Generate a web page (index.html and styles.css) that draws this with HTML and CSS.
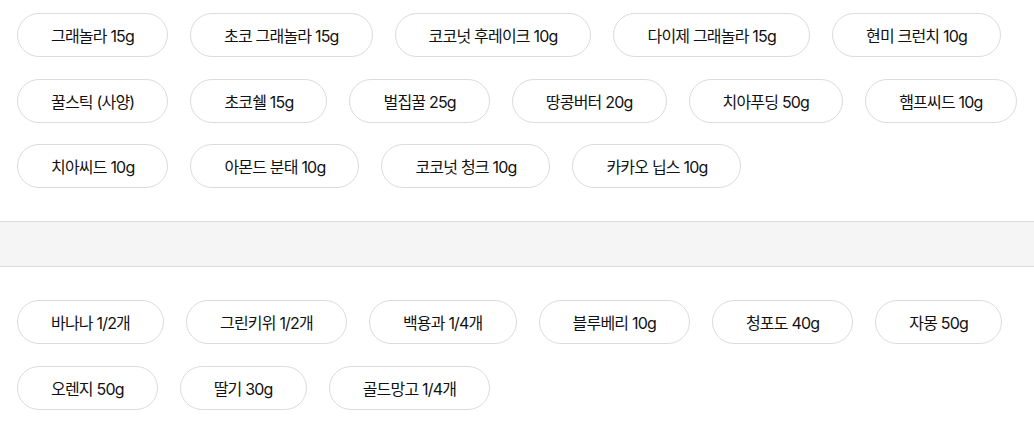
FILE: index.html
```html
<!DOCTYPE html>
<html lang="ko">
<head>
<meta charset="utf-8">
<link rel="stylesheet" href="styles.css">
</head>
<body>
<section class="group group-top">
  <ul class="chips">
    <li class="chip">그래놀라 15g</li>
    <li class="chip">초코 그래놀라 15g</li>
    <li class="chip">코코넛 후레이크 10g</li>
    <li class="chip">다이제 그래놀라 15g</li>
    <li class="chip">현미 크런치 10g</li>
    <li class="chip">꿀스틱 (사양)</li>
    <li class="chip">초코쉘 15g</li>
    <li class="chip">벌집꿀 25g</li>
    <li class="chip">땅콩버터 20g</li>
    <li class="chip">치아푸딩 50g</li>
    <li class="chip">햄프씨드 10g</li>
    <li class="chip">치아씨드 10g</li>
    <li class="chip">아몬드 분태 10g</li>
    <li class="chip">코코넛 청크 10g</li>
    <li class="chip">카카오 닙스 10g</li>
  </ul>
</section>
<div class="divider"></div>
<section class="group group-bottom">
  <ul class="chips">
    <li class="chip">바나나 1/2개</li>
    <li class="chip">그린키위 1/2개</li>
    <li class="chip">백용과 1/4개</li>
    <li class="chip">블루베리 10g</li>
    <li class="chip">청포도 40g</li>
    <li class="chip">자몽 50g</li>
    <li class="chip">오렌지 50g</li>
    <li class="chip">딸기 30g</li>
    <li class="chip">골드망고 1/4개</li>
  </ul>
</section>
</body>
</html>
```

FILE: styles.css
```css
html, body {
  margin: 0;
  padding: 0;
  background: #fff;
}
body {
  font-family: "Inter", "Noto Sans CJK KR", sans-serif;
  color: #111;
  width: 1034px;
}
.group {
  padding: 0 17px;
}
.group-top {
  padding-top: 13px;
  padding-bottom: 33px;
}
.group-bottom {
  padding-top: 33px;
  padding-bottom: 12px;
}
.chips {
  list-style: none;
  margin: 0;
  padding: 0;
  display: flex;
  flex-wrap: wrap;
  gap: 21.5px 22px;
}
.chip {
  box-sizing: border-box;
  height: 44px;
  display: inline-flex;
  align-items: center;
  justify-content: center;
  padding: 0 33px;
  border: 1px solid #dcdcdc;
  border-radius: 22px;
  font-size: 16px;
  letter-spacing: -0.8px;
  white-space: nowrap;
  background: #fff;
}
.divider {
  height: 44px;
  background: #f5f5f5;
  border-top: 1px solid #dcdcdc;
  border-bottom: 1px solid #dcdcdc;
}
```
